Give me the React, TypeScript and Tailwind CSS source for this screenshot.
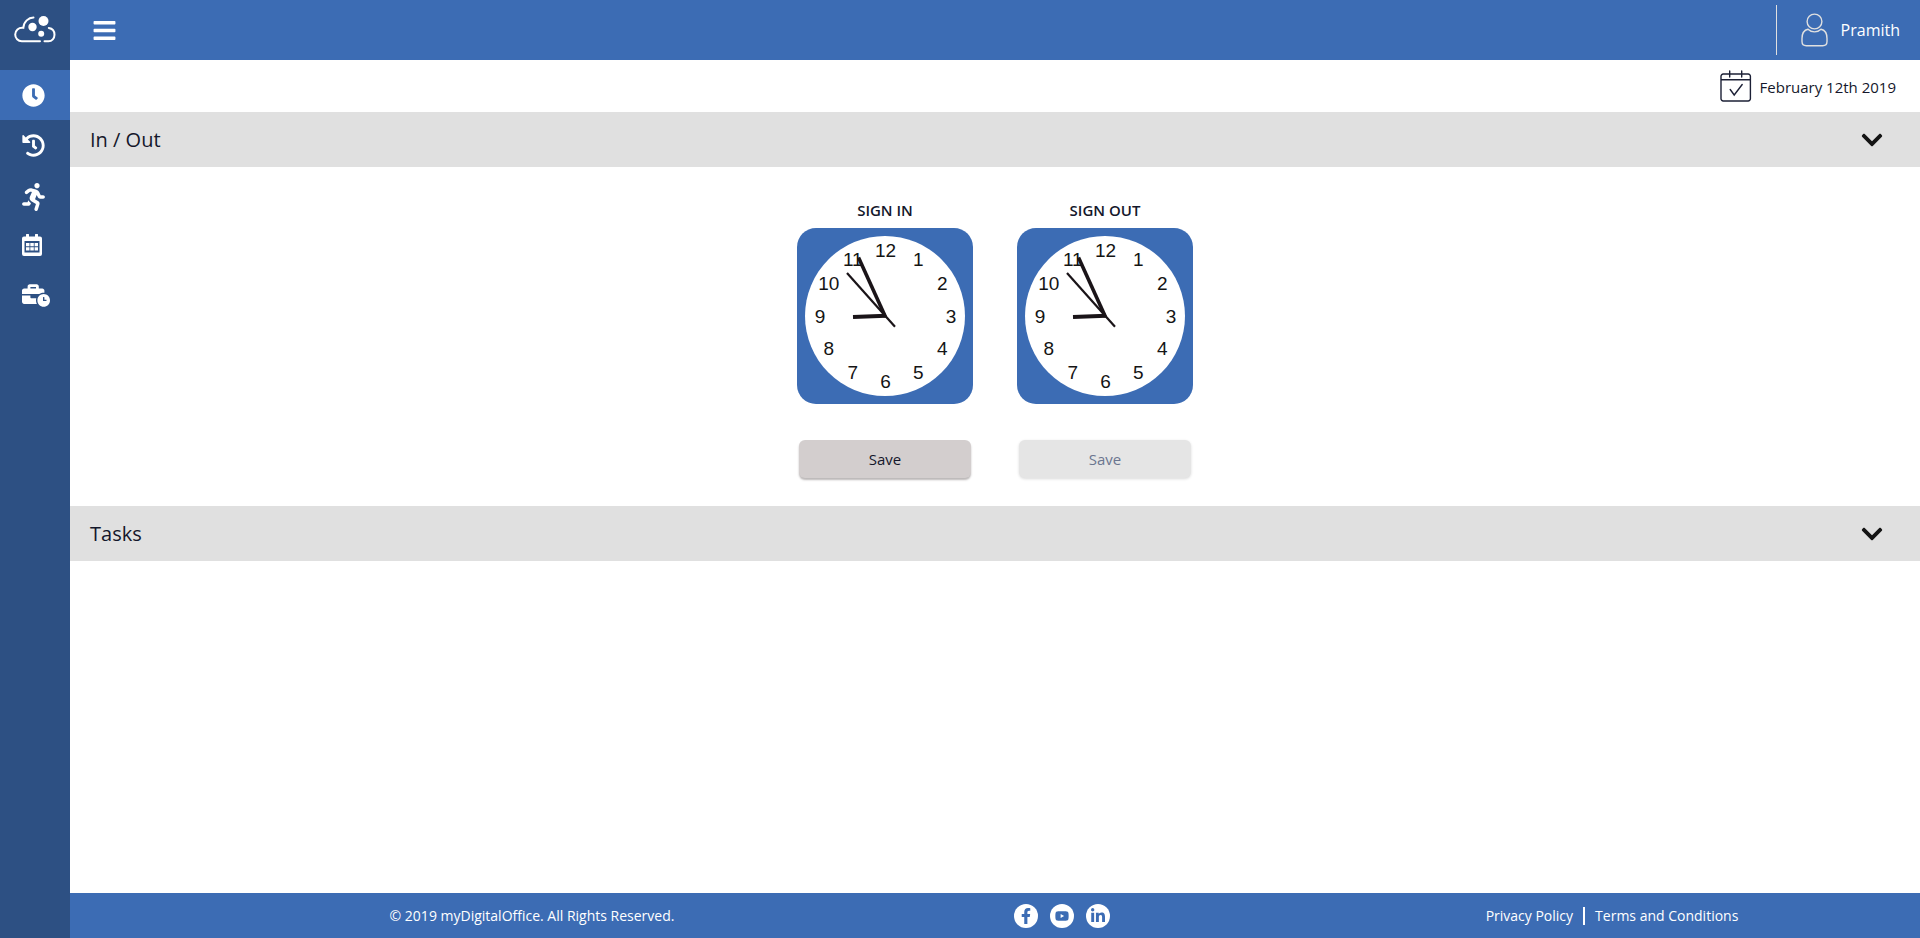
import {
  FaBars,
  FaBusinessTime,
  FaChevronDown,
  FaClock,
  FaFacebookF,
  FaHistory,
  FaLinkedinIn,
  FaRunning,
  FaYoutube,
} from 'react-icons/fa';

function CloudLogo() {
  return (
    <svg viewBox="0 0 42 28" className="h-7 w-[42px]" fill="none" stroke="#fff" strokeWidth="2" strokeLinecap="round" aria-hidden="true">
      <path d="M19.500 2.500C14.500 2.700 9.800 6.500 9.300 12.800C4.500 12.200 1.200 15.500 1.200 19.600C1.200 23.300 4 26.200 7.800 26.200H26" />
      <path d="M30.500 26.200H34.500C38 26.200 40.500 23.300 40.500 19.800C40.500 16 38 13.500 34.800 13" />
      <g fill="#fff" stroke="none">
        <circle cx="18.500" cy="12" r="4.200" />
        <circle cx="29.500" cy="6" r="5" />
        <circle cx="27.200" cy="18.700" r="3" />
      </g>
    </svg>
  );
}

function CalendarGridIcon() {
  return (
    <svg viewBox="0 0 20 22" className="h-[22px] w-5" fill="currentColor" aria-hidden="true">
      <path
        fillRule="evenodd"
        d="M4 0.500A0.500 0.500 0 0 1 4.500 0H6.500A0.500 0.500 0 0 1 7 0.500V2.500H13V0.500A0.500 0.500 0 0 1 13.500 0H15.500A0.500 0.500 0 0 1 16 0.500V2.500H18A2 2 0 0 1 20 4.500V20A2 2 0 0 1 18 22H2A2 2 0 0 1 0 20V4.500A2 2 0 0 1 2 2.500H4ZM2.500 7V18.500H17.500V7Z"
      />
      <path d="M4 9H7.500V12.300H4ZM8.300 9H11.800V12.300H8.300ZM12.600 9H16V12.300H12.600ZM4 13.300H7.500V16.600H4ZM8.300 13.300H11.800V16.600H8.300ZM12.600 13.300H16V16.600H12.600Z" />
    </svg>
  );
}

function UserIcon() {
  return (
    <svg viewBox="0 0 28 34" className="h-[34px] w-7" fill="none" stroke="#e0e0e0" strokeWidth="1.400" aria-hidden="true">
      <circle cx="13.500" cy="8.500" r="7.400" />
      <path d="M7 16.200C3 17 1 21 1 25.500V28.500C1 31 2.800 32.700 5.300 32.700H21.700C24.200 32.700 26 31 26 28.500V25.500C26 21 24 17 20 16.200C16.500 19.800 10.500 19.800 7 16.200Z" />
    </svg>
  );
}

function CalendarCheckIcon() {
  return (
    <svg viewBox="0 0 32 32" className="size-8" fill="none" stroke="#1c2036" strokeWidth="1.400" strokeLinecap="round" aria-hidden="true">
      <path d="M6.500 4H3.200A2.200 2.200 0 0 0 1 6.200V28.800A2.200 2.200 0 0 0 3.200 31H28.200A2.200 2.200 0 0 0 30.400 28.800V6.200A2.200 2.200 0 0 0 28.200 4H25M12.500 4H19M9.700 1V7M21.700 1V7M1 9.800H30.400M7 4H12.500M19 4H24.500" />
      <path d="M10.200 19.500L14.200 25L22.200 14.500" />
    </svg>
  );
}

const HOURS = [1, 2, 3, 4, 5, 6, 7, 8, 9, 10, 11, 12];

function AnalogClock({ label }: { label: string }) {
  return (
    <svg viewBox="0 0 176 176" className="size-44" role="img" aria-label={label}>
      <rect width="176" height="176" rx="19" fill="#3c6cb4" />
      <circle cx="88" cy="88" r="80" fill="#fff" />
      <g className="font-['Liberation_Sans',sans-serif] text-[19px]" fill="#141414" textAnchor="middle">
        {HOURS.map((h) => {
          const a = (h * Math.PI) / 6;
          return (
            <text key={h} x={88.5 + 65.5 * Math.sin(a)} y={94.5 - 65.5 * Math.cos(a)}>
              {h}
            </text>
          );
        })}
      </g>
      <g stroke="#1a1418">
        <path d="M89 87.700L56 89" strokeWidth="4" />
        <path d="M88.500 89L61.500 29.500" strokeWidth="3.600" />
        <path d="M98 98.800L50 45" strokeWidth="2.200" />
      </g>
    </svg>
  );
}

const NAV = [
  { label: 'Clock', icon: <FaClock className="size-[23px]" />, active: true },
  { label: 'History', icon: <FaHistory className="size-[23px]" /> },
  { label: 'Leave', icon: <FaRunning className="mt-1 h-7 w-[23px]" /> },
  { label: 'Calendar', icon: <CalendarGridIcon /> },
  { label: 'Work hours', icon: <FaBusinessTime className="h-[23px] w-7" /> },
];

const SOCIAL = [
  { label: 'Facebook', icon: <FaFacebookF className="size-4" /> },
  { label: 'YouTube', icon: <FaYoutube className="size-3.5" /> },
  { label: 'LinkedIn', icon: <FaLinkedinIn className="size-4" /> },
];

function SectionBar({ title }: { title: string }) {
  return (
    <h2>
      <button type="button" className="flex h-[55px] w-full items-center justify-between bg-[#e0e0e0] pr-9 pl-5 text-xl">
        {title}
        <FaChevronDown className="size-6 text-[#141414]" aria-hidden="true" />
      </button>
    </h2>
  );
}

function ClockPanel({ title, disabled }: { title: string; disabled?: boolean }) {
  return (
    <section className="flex flex-col items-center">
      <h3 className="mb-2 text-[15px] leading-5 font-semibold">{title}</h3>
      <AnalogClock label={`${title} time`} />
      <button
        type="button"
        disabled={disabled}
        className="mt-9 h-[38px] w-[172px] rounded-md bg-[#d3cece] text-[15px] shadow-[0_2px_2px_rgba(60,50,50,0.35)] disabled:bg-[#e5e5e5] disabled:text-[#6b7690] disabled:shadow-[0_1px_3px_rgba(0,0,0,0.15)]"
      >
        Save
      </button>
    </section>
  );
}

export default function App() {
  return (
    <div className="flex min-h-screen bg-white font-['Open_Sans','Noto_Sans',sans-serif] text-[#14172b]">
      <aside className="w-[70px] shrink-0 bg-[#2d5083]">
        <a href="#home" aria-label="Home" className="flex h-[70px] justify-center pt-[15px]">
          <CloudLogo />
        </a>
        <nav>
          {NAV.map((item) => (
            <a
              key={item.label}
              href="#nav"
              aria-label={item.label}
              className={`flex h-[50px] items-center pl-[22px] text-white ${item.active ? 'bg-[#3c6cb4]' : ''}`}
            >
              {item.icon}
            </a>
          ))}
        </nav>
      </aside>

      <div className="flex min-w-0 flex-1 flex-col">
        <header className="flex h-[60px] items-center justify-between bg-[#3c6cb4] pr-5 pl-[22px] text-white">
          <button type="button" aria-label="Toggle menu">
            <FaBars className="size-[25px]" />
          </button>
          <button type="button" className="flex h-[50px] items-center gap-3 border-l border-[#e0e0e0] pl-6 text-base font-medium">
            <UserIcon />
            Pramith
          </button>
        </header>

        <div className="flex h-[52px] items-center justify-end gap-2 pr-6 text-[15px]">
          <CalendarCheckIcon />
          <time dateTime="2019-02-12" className="pt-0.5">
            February 12th 2019
          </time>
        </div>

        <main className="flex-1">
          <SectionBar title="In / Out" />
          <div className="flex justify-center gap-11 pt-[33px] pb-7">
            <ClockPanel title="SIGN IN" />
            <ClockPanel title="SIGN OUT" disabled />
          </div>
          <SectionBar title="Tasks" />
        </main>

        <footer className="grid h-[45px] grid-cols-3 items-center bg-[#3c6cb4] pr-[38px] pl-48 text-sm font-medium text-white">
          <p className="text-center">© 2019 myDigitalOffice. All Rights Reserved.</p>
          <div className="flex justify-center gap-3 pr-5">
            {SOCIAL.map((s) => (
              <a
                key={s.label}
                href="#social"
                aria-label={s.label}
                className="flex size-6 items-center justify-center rounded-full bg-white text-[#3c6cb4]"
              >
                {s.icon}
              </a>
            ))}
          </div>
          <div className="flex items-center justify-center">
            <a href="#privacy">Privacy Policy</a>
            <span className="mx-2.5 h-[18px] w-0.5 bg-white" />
            <a href="#terms">Terms and Conditions</a>
          </div>
        </footer>
      </div>
    </div>
  );
}
